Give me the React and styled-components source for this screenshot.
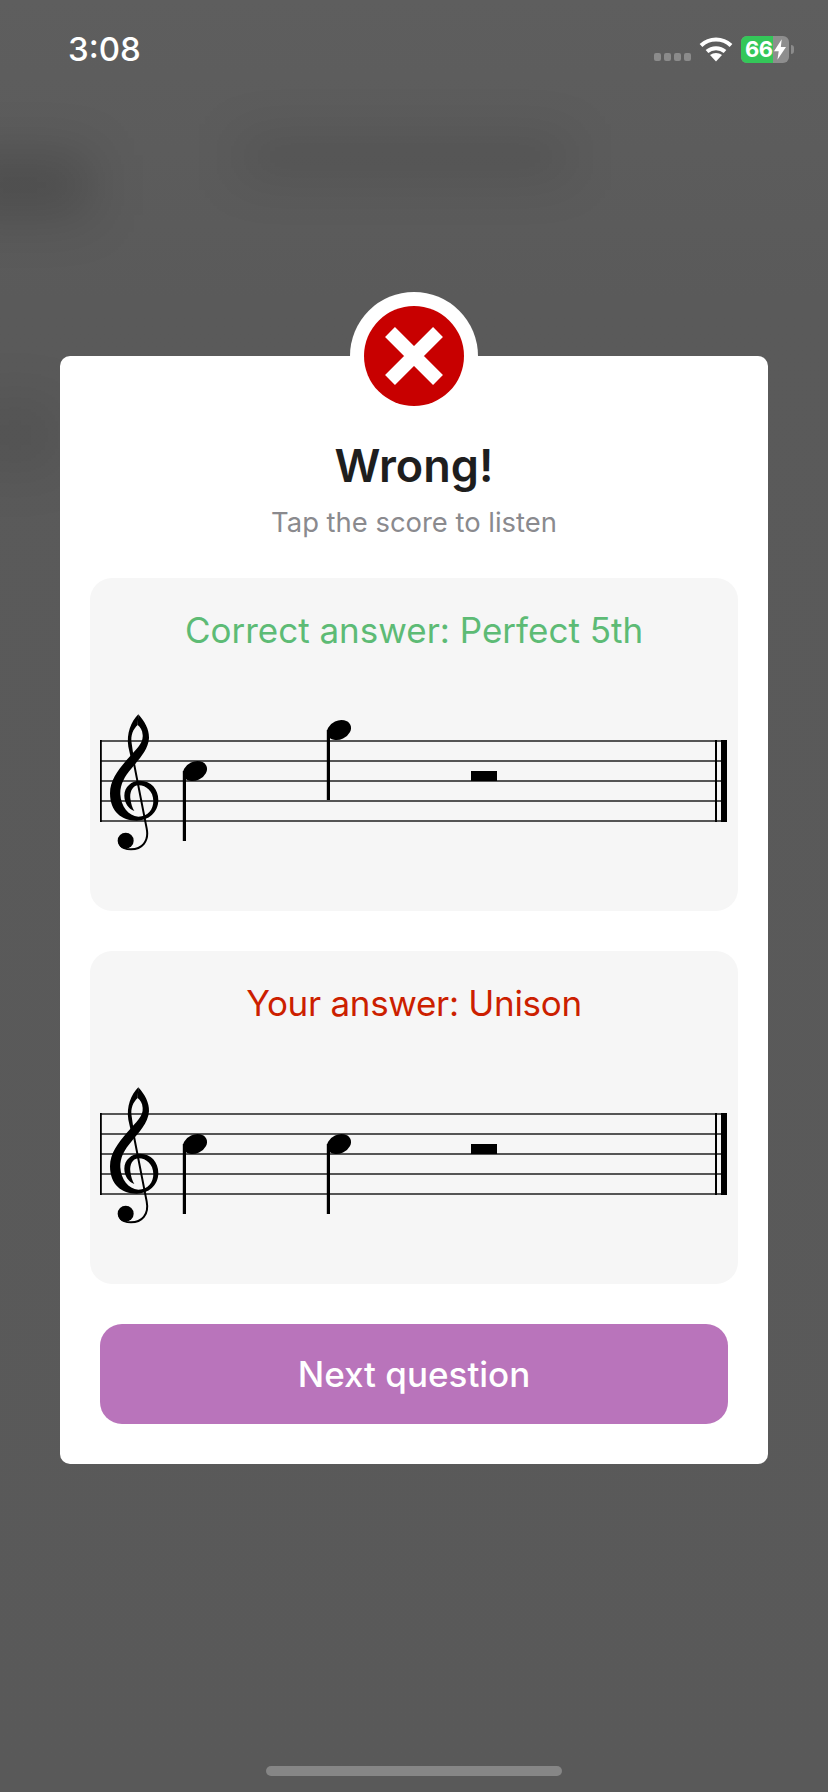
import styled, { createGlobalStyle } from 'styled-components';

const GlobalStyle = createGlobalStyle`
  html, body {
    margin: 0;
    padding: 0;
    background: #5a5a5a;
  }
  * {
    box-sizing: border-box;
  }
`;

const CLEF_BODY =
  'M130 28 C150 50 163 75 162 100 C160 135 130 165 110 190 C88 215 75 240 76 268 C78 305 100 333 130 335 C160 335 175 312 175 288 C175 258 152 240 130 241 C112 242 104 262 106 280 C108 298 112 308 118 318 C100 312 88 292 88 272 C88 245 110 227 135 227 C168 227 190 252 190 285 C190 322 160 347 125 347 C80 347 45 320 45 265 C45 225 70 195 95 165 C125 130 145 115 143 90 C142 75 136 66 128 60 Z';
const CLEF_LOOP = 'M130 28 C108 50 94 85 100 125 L110 170 L118 170 L110 115 C106 90 115 72 128 60 Z';
const CLEF_STRAND = 'M112 150 L155 370 C163 410 140 433 108 433 C95 433 82 430 75 420';

function Clef() {
  return (
    <g transform="translate(-5 15) scale(0.3333)">
      <path d={CLEF_BODY} fill="#000" />
      <path d={CLEF_LOOP} fill="#000" />
      <path d={CLEF_STRAND} fill="none" stroke="#000" strokeWidth="6" />
      <circle cx="92" cy="407" r="24" fill="#000" />
    </g>
  );
}

function Note({ x, y }) {
  return (
    <g>
      <ellipse cx={x + 10.5} cy={y} rx="12.5" ry="9.5" transform={`rotate(-25 ${x + 10.5} ${y})`} fill="#000" />
      <rect x={x - 1.7} y={y} width="3.2" height="70" fill="#000" />
    </g>
  );
}

function Staff({ notes }) {
  return (
    <StaffSvg viewBox="0 0 628 180">
      {[51, 71, 91, 111, 131].map((y) => (
        <line key={y} x1="0" x2="627" y1={y} y2={y} stroke="#555" strokeWidth="1.8" />
      ))}
      <rect x="0" y="50" width="1.8" height="82" fill="#000" />
      <rect x="615" y="50" width="2" height="82" fill="#000" />
      <rect x="621" y="50" width="6" height="82" fill="#000" />
      <Clef />
      {notes.map((n) => (
        <Note key={n.x} x={n.x} y={n.y} />
      ))}
      <rect x="371" y="81" width="26" height="10" fill="#000" />
    </StaffSvg>
  );
}

export default function App() {
  return (
    <Page>
      <GlobalStyle />
      <Smudge $x={-50} $y={155} $w={140} $h={60} $o={0.16} />
      <Smudge $x={240} $y={140} $w={330} $h={34} $o={0.12} />
      <Smudge $x={-30} $y={400} $w={90} $h={70} $o={0.08} />
      <StatusBar>
        <Clock>3:08</Clock>
        <StatusIcons>
          <Signal>
            <i />
            <i />
            <i />
            <i />
          </Signal>
          <svg width="34" height="26" viewBox="0 0 34 26">
            <path d="M2 9.5 C10.5 1.5 23.5 1.5 32 9.5" fill="none" stroke="#fff" strokeWidth="4" />
            <path d="M8 15.5 C13 11 21 11 26 15.5" fill="none" stroke="#fff" strokeWidth="4" />
            <path d="M11 19 C14.5 16.2 19.5 16.2 23 19 L17 25.5 Z" fill="#fff" />
          </svg>
          <Battery>
            <BatteryFill />
            <BatteryLabel>66</BatteryLabel>
            <svg width="12" height="21" viewBox="0 0 14 24">
              <path d="M9 0 L0 14 H5.5 L4 24 L14 9 H8 Z" fill="#fff" />
            </svg>
          </Battery>
          <BatteryTip />
        </StatusIcons>
      </StatusBar>

      <Modal>
        <Badge>
          <BadgeDisc>
            <svg width="60" height="60" viewBox="0 0 60 60">
              <path d="M6 6 L54 54 M54 6 L6 54" stroke="#fff" strokeWidth="14" />
            </svg>
          </BadgeDisc>
        </Badge>
        <Title>Wrong!</Title>
        <Subtitle>Tap the score to listen</Subtitle>
        <Card>
          <CardTitle $color="#5dbb75">Correct answer: Perfect 5th</CardTitle>
          <Staff notes={[{ x: 84.5, y: 81 }, { x: 228.5, y: 40 }]} />
        </Card>
        <Card>
          <CardTitle $color="#cc1f00" $tracking={-0.3}>Your answer: Unison</CardTitle>
          <Staff notes={[{ x: 84.5, y: 81 }, { x: 228.5, y: 81 }]} />
        </Card>
        <NextButton>Next question</NextButton>
      </Modal>

      <HomeIndicator />
    </Page>
  );
}

const Page = styled.div`
  position: relative;
  width: 828px;
  height: 1792px;
  overflow: hidden;
  display: flex;
  flex-direction: column;
  background: linear-gradient(#5e5e5e 0, #5a5a5a 300px, #595959 100%);
  font-family: Inter, 'Liberation Sans', sans-serif;
`;

const Smudge = styled.div`
  position: absolute;
  left: ${(p) => p.$x}px;
  top: ${(p) => p.$y}px;
  width: ${(p) => p.$w}px;
  height: ${(p) => p.$h}px;
  background: rgba(0, 0, 0, ${(p) => p.$o});
  filter: blur(26px);
`;

const StatusBar = styled.div`
  position: relative;
  height: 86px;
  padding: 14px 34px 0 68px;
  display: flex;
  justify-content: space-between;
  align-items: center;
`;

const Clock = styled.div`
  color: #fff;
  font-size: 33px;
  font-weight: 500;
  line-height: 40px;
  margin-top: -2px;
`;

const StatusIcons = styled.div`
  display: flex;
  align-items: center;
  margin-top: -2px;

  svg {
    flex: none;
  }
`;

const Signal = styled.div`
  display: flex;
  gap: 3px;
  align-self: flex-end;
  margin: 0 8px 2px 0;

  i {
    display: block;
    width: 7px;
    height: 8px;
    border-radius: 2px;
    background: #8b8b8b;
  }
`;

const Battery = styled.div`
  position: relative;
  width: 48px;
  height: 27px;
  margin-left: 8px;
  border-radius: 6px;
  overflow: hidden;
  background: #8e8e8e;
  display: flex;
  align-items: center;
  padding-left: 4px;

  svg {
    position: relative;
    margin-left: 1px;
  }
`;

const BatteryFill = styled.div`
  position: absolute;
  left: 0;
  top: 0;
  bottom: 0;
  width: 32px;
  background: #34c759;
`;

const BatteryLabel = styled.span`
  position: relative;
  color: #fff;
  font-size: 22px;
  font-weight: 700;
  line-height: 27px;
  letter-spacing: -0.5px;
`;

const BatteryTip = styled.div`
  width: 3px;
  height: 9px;
  margin-left: 2px;
  border-radius: 0 3px 3px 0;
  background: #8b8b8b;
`;

const Modal = styled.div`
  position: relative;
  margin: 270px 60px 0;
  height: 1108px;
  padding: 82px 30px 40px;
  border-radius: 10px;
  background: #fff;
  display: flex;
  flex-direction: column;
`;

const Badge = styled.div`
  position: absolute;
  top: -64px;
  left: 50%;
  margin-left: -64px;
  width: 128px;
  height: 128px;
  border-radius: 50%;
  background: #fff;
  display: flex;
  align-items: center;
  justify-content: center;
`;

const BadgeDisc = styled.div`
  width: 100px;
  height: 100px;
  border-radius: 50%;
  background: #c80000;
  display: flex;
  align-items: center;
  justify-content: center;
`;

const Title = styled.h1`
  margin: 0;
  text-align: center;
  color: #1e1e1e;
  font-size: 45px;
  font-weight: 600;
  line-height: 56px;
`;

const Subtitle = styled.p`
  margin: 11px 0 39px;
  text-align: center;
  color: #8a8a8e;
  font-size: 27.4px;
  font-weight: 400;
  line-height: 34px;
`;

const Card = styled.section`
  height: 333px;
  flex: none;
  margin-bottom: 40px;
  padding-top: 30px;
  border-radius: 22px;
  background: #f6f6f6;
`;

const CardTitle = styled.h2`
  margin: 0 0 38px;
  text-align: center;
  color: ${(p) => p.$color};
  font-size: 35px;
  font-weight: 400;
  line-height: 44px;
  letter-spacing: ${(p) => p.$tracking || 0}px;
`;

const StaffSvg = styled.svg`
  display: block;
  width: 628px;
  height: 180px;
  margin: 0 10px;
`;

const NextButton = styled.button`
  height: 100px;
  flex: none;
  margin: 0 10px;
  border: 0;
  border-radius: 22px;
  background: #b974bb;
  color: #fff;
  font-family: inherit;
  font-size: 35px;
  font-weight: 500;
`;

const HomeIndicator = styled.div`
  width: 296px;
  height: 10px;
  margin: auto auto 16px;
  border-radius: 5px;
  background: #868686;
`;
